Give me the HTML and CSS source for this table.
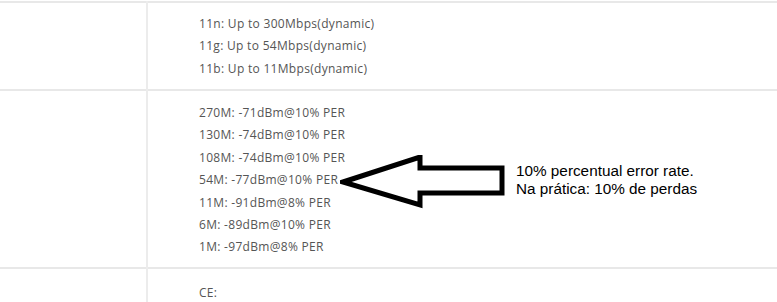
FILE: index.html
```html
<!DOCTYPE html>
<html>
<head>
<meta charset="utf-8">
<link rel="stylesheet" href="styles.css">
</head>
<body>
<div class="page">
  <table class="spec">
    <tr class="row first">
      <td class="label"></td>
      <td class="value">
        <div class="line">11n: Up to 300Mbps(dynamic)</div>
        <div class="line">11g: Up to 54Mbps(dynamic)</div>
        <div class="line">11b: Up to 11Mbps(dynamic)</div>
      </td>
    </tr>
    <tr class="row second">
      <td class="label"></td>
      <td class="value">
        <div class="line">270M: -71dBm@10% PER</div>
        <div class="line">130M: -74dBm@10% PER</div>
        <div class="line">108M: -74dBm@10% PER</div>
        <div class="line">54M: -77dBm@10% PER</div>
        <div class="line">11M: -91dBm@8% PER</div>
        <div class="line">6M: -89dBm@10% PER</div>
        <div class="line">1M: -97dBm@8% PER</div>
      </td>
    </tr>
    <tr class="row third">
      <td class="label"></td>
      <td class="value">
        <div class="line">CE:</div>
      </td>
    </tr>
  </table>
  <svg class="arrow" width="170" height="56" viewBox="0 0 170 56">
    <path d="M3 27 L80 2 L80 13 L162 13 L162 38 L80 38 L80 50 Z" fill="#fff" stroke="#000" stroke-width="5" stroke-linejoin="miter"/>
  </svg>
  <div class="note">
    <div>10% percentual error rate.</div>
    <div>Na prática: 10% de perdas</div>
  </div>
</div>
</body>
</html>
```

FILE: styles.css
```css
html, body {
  margin: 0;
  padding: 0;
  background: #fff;
}
.page {
  position: relative;
  width: 777px;
  height: 302px;
  overflow: hidden;
}
.spec {
  border-collapse: collapse;
  width: 777px;
  margin-top: 1px;
  font-family: "Open Sans", "DejaVu Sans", sans-serif;
  font-size: 12px;
  letter-spacing: 0.3px;
  color: #555;
}
.spec td {
  padding: 0;
  vertical-align: top;
  border-top: 2px solid #e8e8e8;
}
.spec .label {
  width: 146px;
  border-right: 2px solid #ececec;
}
.spec .value {
  padding-left: 51px;
}
.first .value {
  padding-top: 10px;
  height: 76px;
}
.second .value {
  padding-top: 11px;
  height: 165px;
}
.third .value {
  padding-top: 13px;
  height: 32px;
}
.line {
  height: 22.4px;
  line-height: 22px;
  white-space: nowrap;
}
.arrow {
  position: absolute;
  left: 340px;
  top: 155px;
}
.note {
  position: absolute;
  left: 516px;
  top: 162px;
  font-family: "Liberation Sans", Arial, sans-serif;
  font-size: 15.3px;
  line-height: 18px;
  color: #000;
}
```
